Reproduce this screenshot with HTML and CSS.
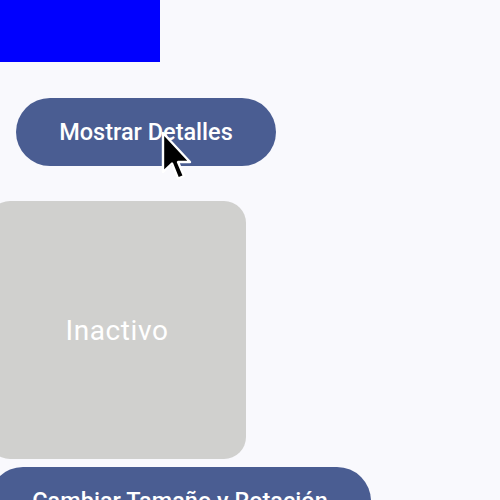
FILE: index.html
```html
<!DOCTYPE html>
<html>
<head>
<meta charset="utf-8">
<link rel="stylesheet" href="styles.css">
</head>
<body>
<div class="screen">
  <div class="blue-box"></div>
  <button class="pill pill-details">Mostrar Detalles</button>
  <div class="card">Inactivo</div>
  <button class="pill pill-resize">Cambiar Tamaño y Rotación</button>
  <svg class="cursor" width="32" height="52" viewBox="0 0 32 52">
    <path d="M2 2 L2 41 L11 32.5 L17 47.5 L23 45 L17 31 L29 31 Z" fill="#000" stroke="#fff" stroke-width="2.4" stroke-linejoin="round"/>
  </svg>
</div>
</body>
</html>
```
FILE: styles.css
```css
* { box-sizing: border-box; }
html, body { margin: 0; padding: 0; }
body {
  width: 500px;
  height: 500px;
  overflow: hidden;
  background: #f9f9fd;
  font-family: Roboto, "Noto Sans", sans-serif;
}
.screen {
  position: relative;
  width: 500px;
  height: 500px;
  overflow: hidden;
  display: flex;
  flex-direction: column;
  align-items: flex-start;
}
.screen > * { flex-shrink: 0; }
.blue-box {
  width: 160px;
  height: 62px;
  background: #0000ff;
}
.pill {
  border: none;
  background: #4a5d92;
  color: #fff;
  font-family: Roboto, sans-serif;
  font-weight: 500;
  font-size: 23.5px;
  border-radius: 34px;
  padding: 0;
}
.pill-details {
  margin-top: 36px;
  margin-left: 16px;
  width: 260px;
  height: 68px;
}
.card {
  margin-top: 35px;
  margin-left: -12px;
  width: 258px;
  height: 258px;
  border-radius: 22px;
  background: #d0d0ce;
  color: #fff;
  font-size: 28px;
  letter-spacing: 0.6px;
  display: flex;
  align-items: center;
  justify-content: center;
}
.pill-resize {
  margin-top: 8px;
  margin-left: -11px;
  width: 382px;
  height: 68px;
}
.cursor {
  position: absolute;
  left: 161px;
  top: 131px;
}
```
